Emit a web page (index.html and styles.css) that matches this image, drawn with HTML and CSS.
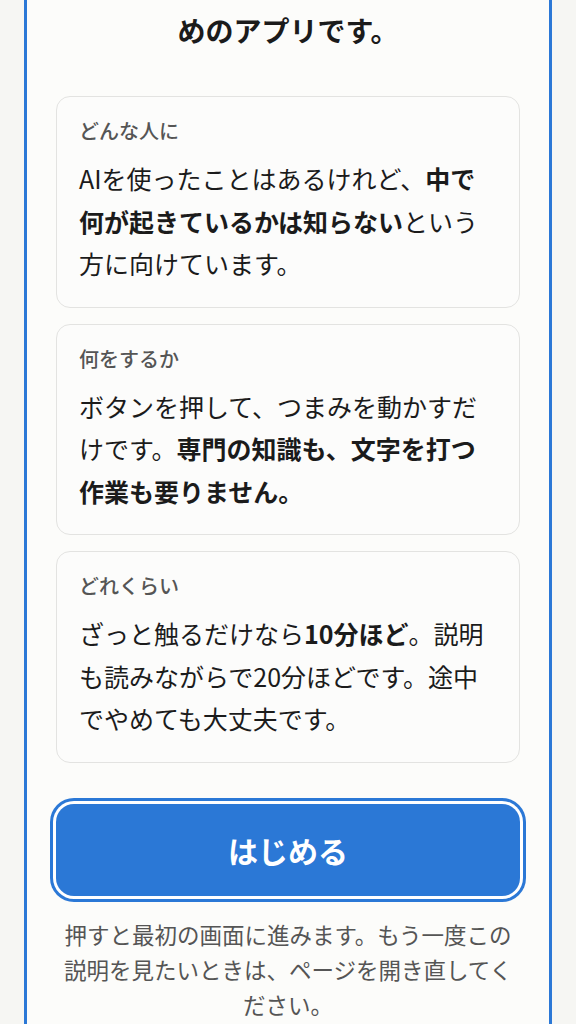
FILE: index.html
```html
<!DOCTYPE html>
<html lang="ja">
<head>
<meta charset="utf-8">
<meta name="viewport" content="width=device-width, initial-scale=1">
<title>はじめに</title>
<link rel="stylesheet" href="styles.css">
</head>
<body>
<main class="frame">
  <h1 class="title">めのアプリです。</h1>
  <div class="cards">
    <section class="card">
      <h2 class="card-label">どんな人に</h2>
      <p class="card-body">AIを使ったことはあるけれど、<strong>中で何が起きているかは知らない</strong>という方に向けています。</p>
    </section>
    <section class="card">
      <h2 class="card-label">何をするか</h2>
      <p class="card-body">ボタンを押して、つまみを動かすだけです。<strong>専門の知識も、文字を打つ作業も要りません。</strong></p>
    </section>
    <section class="card">
      <h2 class="card-label">どれくらい</h2>
      <p class="card-body">ざっと触るだけなら<strong>10分ほど</strong>。説明も読みながらで20分ほどです。途中でやめても大丈夫です。</p>
    </section>
  </div>
  <button class="start" type="button">はじめる</button>
  <p class="note">押すと最初の画面に進みます。もう一度この説明を見たいときは、ページを開き直してください。</p>
</main>
</body>
</html>
```
FILE: styles.css
```css
html, body {
  margin: 0;
  padding: 0;
  background: #f6f6f3;
}

body {
  font-family: "Noto Sans CJK JP", "Noto Sans", sans-serif;
  color: #1b1b1b;
}

.frame {
  margin: 0 24px;
  border-left: 3px solid #2b78d6;
  border-right: 3px solid #2b78d6;
  background: #fcfcfa;
  padding: 11px 29px 40px;
  display: flex;
  flex-direction: column;
}

.title {
  margin: 0 0 47px;
  font-size: 28px;
  line-height: 38px;
  font-weight: 700;
  text-align: center;
}

.cards {
  display: flex;
  flex-direction: column;
  gap: 16px;
}

.card {
  border: 1px solid #e3e3e1;
  border-radius: 14px;
  padding: 20px 22px 22px;
  background: #fcfcfb;
}

.card-label {
  margin: 0;
  font-size: 20px;
  line-height: 28px;
  font-weight: 500;
  color: #555555;
}

.card-body {
  margin: 12px 0 0;
  font-size: 25px;
  line-height: 42.5px;
}

.card-body strong {
  font-weight: 700;
}

.start {
  margin-top: 41px;
  height: 92px;
  border: none;
  border-radius: 18px;
  background: #2b78d6;
  color: #ffffff;
  font-family: "Noto Sans CJK JP", "Noto Sans", sans-serif;
  font-size: 30px;
  font-weight: 700;
  box-shadow: 0 0 0 3px #ffffff, 0 0 0 6px #2b78d6;
}

.note {
  margin: 21px 0 0;
  font-size: 22.5px;
  line-height: 35px;
  color: #555555;
  text-align: center;
}
```
